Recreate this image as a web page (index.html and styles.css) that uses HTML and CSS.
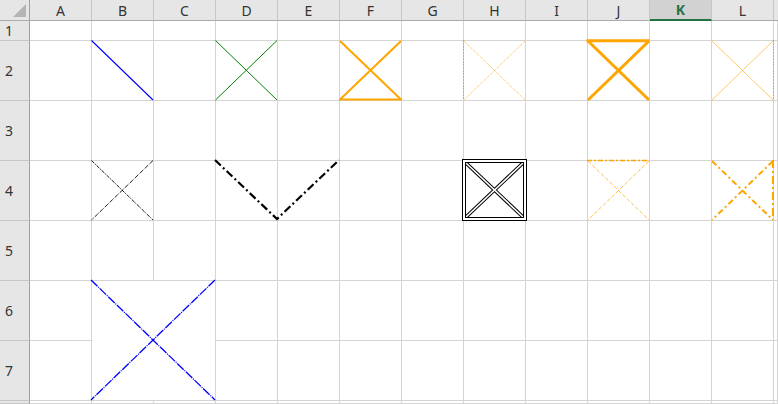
FILE: index.html
```html
<!DOCTYPE html>
<html>
<head>
<meta charset="utf-8">
<link rel="stylesheet" href="styles.css">
</head>
<body>
<div class="sheet">
  <div class="grid">
    <div class="corner"><svg width="29" height="20" viewBox="0 0 29 20"><polygon points="13,17 26,17 26,4" fill="#b4b4b4"/></svg></div>
    <div class="ch">A</div><div class="ch">B</div><div class="ch">C</div><div class="ch">D</div><div class="ch">E</div><div class="ch">F</div><div class="ch">G</div><div class="ch">H</div><div class="ch">I</div><div class="ch">J</div><div class="ch sel">K</div><div class="ch">L</div><div class="ch end"></div>

    <div class="rh">1</div><div class="c"></div><div class="c"></div><div class="c"></div><div class="c"></div><div class="c"></div><div class="c"></div><div class="c"></div><div class="c"></div><div class="c"></div><div class="c"></div><div class="c"></div><div class="c"></div><div class="c"></div>
    <div class="rh">2</div><div class="c"></div><div class="c"></div><div class="c"></div><div class="c"></div><div class="c"></div><div class="c"></div><div class="c"></div><div class="c"></div><div class="c"></div><div class="c"></div><div class="c"></div><div class="c"></div><div class="c"></div>
    <div class="rh">3</div><div class="c"></div><div class="c"></div><div class="c"></div><div class="c"></div><div class="c"></div><div class="c"></div><div class="c"></div><div class="c"></div><div class="c"></div><div class="c"></div><div class="c"></div><div class="c"></div><div class="c"></div>
    <div class="rh">4</div><div class="c"></div><div class="c"></div><div class="c"></div><div class="c"></div><div class="c"></div><div class="c"></div><div class="c"></div><div class="c"></div><div class="c"></div><div class="c"></div><div class="c"></div><div class="c"></div><div class="c"></div>
    <div class="rh">5</div><div class="c"></div><div class="c"></div><div class="c"></div><div class="c"></div><div class="c"></div><div class="c"></div><div class="c"></div><div class="c"></div><div class="c"></div><div class="c"></div><div class="c"></div><div class="c"></div><div class="c"></div>
    <div class="rh">6</div><div class="c"></div><div class="c merged"></div><div class="c"></div><div class="c"></div><div class="c"></div><div class="c"></div><div class="c"></div><div class="c"></div><div class="c"></div><div class="c"></div><div class="c"></div><div class="c"></div>
    <div class="rh">7</div><div class="c"></div><div class="c"></div><div class="c"></div><div class="c"></div><div class="c"></div><div class="c"></div><div class="c"></div><div class="c"></div><div class="c"></div><div class="c"></div><div class="c"></div>
    <div class="rh"></div><div class="c"></div><div class="c"></div><div class="c"></div><div class="c"></div><div class="c"></div><div class="c"></div><div class="c"></div><div class="c"></div><div class="c"></div><div class="c"></div><div class="c"></div><div class="c"></div><div class="c"></div>
  </div>

  <svg class="drawing" width="778" height="404" viewBox="0 0 778 404">
    <!-- B2 -->
    <line x1="91.5" y1="40.5" x2="153" y2="100" stroke="#0000ff" stroke-width="1.1"/>
    <!-- D2 -->
    <line x1="215.5" y1="40.5" x2="277" y2="100" stroke="#008000" stroke-width="1"/>
    <line x1="277" y1="40.5" x2="215.5" y2="100" stroke="#008000" stroke-width="1"/>
    <!-- F2 -->
    <line x1="340" y1="41" x2="401" y2="99.5" stroke="#ffa500" stroke-width="2"/>
    <line x1="401" y1="41" x2="340" y2="99.5" stroke="#ffa500" stroke-width="2"/>
    <line x1="339" y1="99.5" x2="402" y2="99.5" stroke="#ffa500" stroke-width="2"/>
    <!-- H2 -->
    <line x1="464" y1="41" x2="525" y2="100" stroke="#ffa500" stroke-width="0.8" stroke-dasharray="1 1"/>
    <line x1="525" y1="41" x2="464" y2="100" stroke="#ffa500" stroke-width="0.8" stroke-dasharray="1 1"/>
    <line class="crisp" x1="463.5" y1="40" x2="463.5" y2="100" stroke="#ffa500" stroke-width="1" stroke-dasharray="2 1"/>
    <!-- J2 -->
    <line x1="588" y1="41" x2="649" y2="100" stroke="#ffa500" stroke-width="3"/>
    <line x1="649" y1="41" x2="588" y2="100" stroke="#ffa500" stroke-width="3"/>
    <line x1="586.5" y1="40.8" x2="649.5" y2="40.8" stroke="#ffa500" stroke-width="3"/>
    <!-- L2 -->
    <line x1="712" y1="41" x2="773" y2="100" stroke="#ffa500" stroke-width="0.6"/>
    <line x1="773" y1="41" x2="712" y2="100" stroke="#ffa500" stroke-width="0.6"/>
    <line class="crisp" x1="773.5" y1="40" x2="773.5" y2="100" stroke="#ffa500" stroke-width="1" stroke-dasharray="2 1"/>
    <!-- B4 -->
    <line x1="91.5" y1="160.5" x2="153" y2="220" stroke="#000" stroke-width="0.9" stroke-dasharray="4 1 1 1"/>
    <line x1="153" y1="160.5" x2="91.5" y2="220" stroke="#000" stroke-width="0.9" stroke-dasharray="4 1 1 1"/>
    <!-- D4:F4 V -->
    <polyline points="215,160 277,219 339,160" fill="none" stroke="#000" stroke-width="2.2" stroke-dasharray="8 3 2 3"/>
    <!-- H4 double -->
    <line x1="466" y1="163" x2="523" y2="217" stroke="#000" stroke-width="3.6"/>
    <line x1="523" y1="163" x2="466" y2="217" stroke="#000" stroke-width="3.6"/>
    <line x1="466" y1="163" x2="523" y2="217" stroke="#fff" stroke-width="1.6"/>
    <line x1="523" y1="163" x2="466" y2="217" stroke="#fff" stroke-width="1.6"/>
    <rect x="464" y="161" width="61" height="58" fill="none" stroke="#000" stroke-width="4"/>
    <rect x="464" y="161" width="61" height="58" fill="none" stroke="#fff" stroke-width="2"/>
    <!-- J4 -->
    <line x1="588" y1="161" x2="649" y2="220" stroke="#ffa500" stroke-width="0.7" stroke-dasharray="4 2"/>
    <line x1="649" y1="161" x2="588" y2="220" stroke="#ffa500" stroke-width="0.7" stroke-dasharray="4 2"/>
    <line x1="587" y1="160.5" x2="649" y2="160.5" stroke="#ffa500" stroke-width="1.5" stroke-dasharray="5 2 2 2"/>
    <!-- L4 -->
    <line x1="712" y1="161" x2="773" y2="220" stroke="#ffa500" stroke-width="2" stroke-dasharray="6 3 2 3"/>
    <line x1="773" y1="161" x2="712" y2="220" stroke="#ffa500" stroke-width="2" stroke-dasharray="6 3 2 3"/>
    <line x1="773" y1="160" x2="773" y2="220" stroke="#ffa500" stroke-width="2" stroke-dasharray="8 3 2 3"/>
    <!-- B6:C7 -->
    <line x1="91" y1="280" x2="215" y2="400" stroke="#0000ff" stroke-width="1.3" stroke-dasharray="9 1 1 1"/>
    <line x1="215" y1="280" x2="91" y2="400" stroke="#0000ff" stroke-width="1.3" stroke-dasharray="9 1 1 1"/>
  </svg>
</div>
</body>
</html>
```

FILE: styles.css
```css
* { box-sizing: border-box; }
html, body {
  margin: 0;
  padding: 0;
  background: #fff;
  overflow: hidden;
}
.sheet {
  position: relative;
  width: 778px;
  height: 404px;
  overflow: hidden;
  font-family: "Noto Sans", "Open Sans", sans-serif;
  font-size: 14px;
  color: #333;
}
.grid {
  display: grid;
  grid-template-columns: 30px repeat(12, 62px) 1fr;
  grid-template-rows: 21px 20px repeat(6, 60px) 1fr;
  width: 778px;
  height: 404px;
}
.corner {
  background: #e6e6e6;
  border-right: 1px solid #9f9f9f;
  border-bottom: 1px solid #ababab;
}
.corner svg { display: block; }
.ch {
  background: #e6e6e6;
  border-right: 1px solid #c6c6c6;
  border-bottom: 1px solid #ababab;
  display: flex;
  align-items: center;
  justify-content: center;
  line-height: 1;
  padding-top: 1px;
}
.ch.sel {
  background: #d2d2d2;
  color: #217346;
  font-weight: bold;
  border-bottom: 2px solid #217346;
}
.ch.end { border-right: none; }
.rh {
  background: #e6e6e6;
  border-right: 1px solid #9f9f9f;
  border-bottom: 1px solid #c6c6c6;
  display: flex;
  align-items: center;
  padding-left: 5px;
  line-height: 1;
}
.c {
  border-right: 1px solid #d4d4d4;
  border-bottom: 1px solid #d4d4d4;
}
.merged {
  grid-column: span 2;
  grid-row: span 2;
}
.drawing {
  position: absolute;
  left: 0;
  top: 0;
  pointer-events: none;
}
.crisp { shape-rendering: crispEdges; }
```
